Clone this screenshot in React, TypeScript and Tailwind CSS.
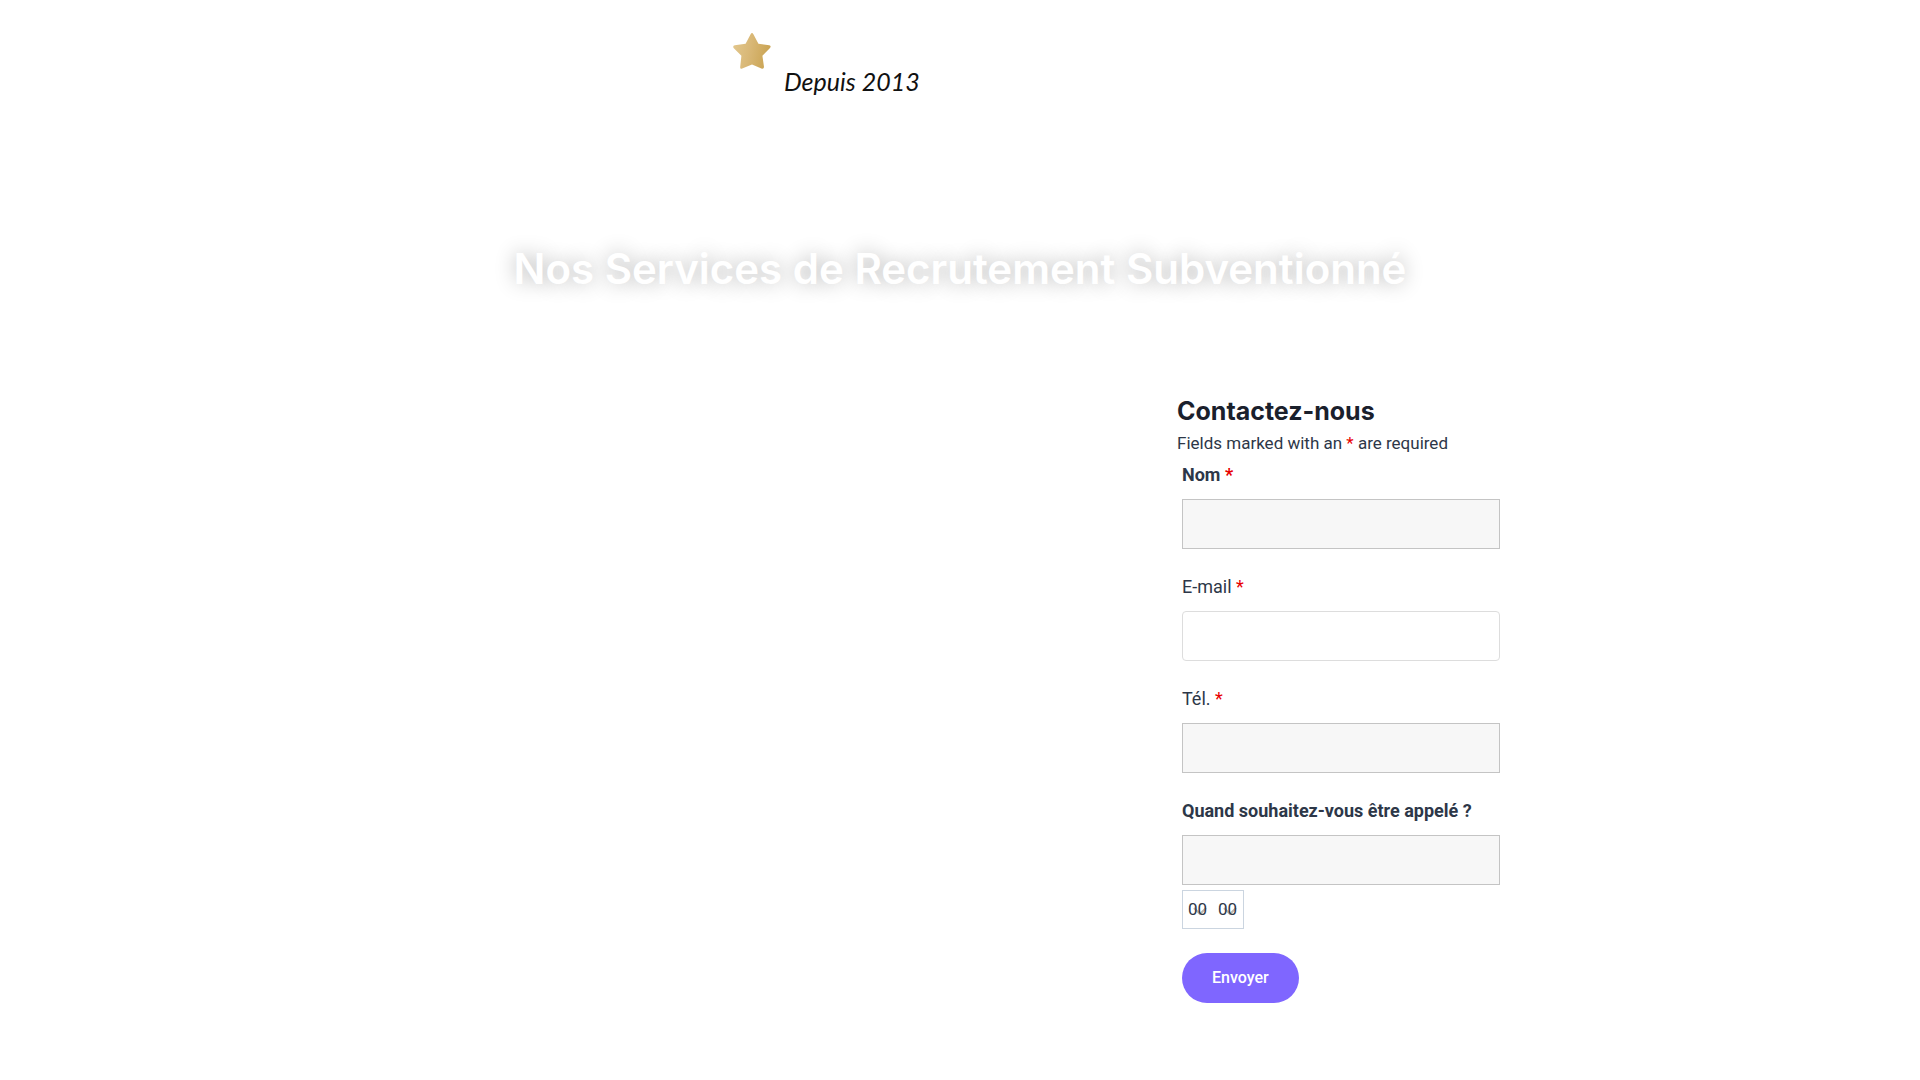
import React from 'react';

type FieldProps = {
  id: string;
  label: string;
  type?: string;
  bold?: boolean;
  required?: boolean;
  inputClass?: string;
};

const greyInput = "border-[#c4c4c4] bg-[#f7f7f7]";

function Required() {
  return <span className="text-[#e80000]">*</span>;
}

function Field({ id, label, type = "text", bold, required, inputClass = greyInput }: FieldProps) {
  return (
    <div>
      <label
        htmlFor={id}
        className={`block text-[18px] leading-[28px] mb-[10px] ${bold ? "font-bold" : "font-normal"}`}
      >
        {label} {required && <Required />}
      </label>
      <input id={id} type={type} className={`block w-full h-[50px] px-3 border ${inputClass}`} />
    </div>
  );
}

function TimeSelect({ label, count }: { label: string; count: number }) {
  const options = Array.from({ length: count }, (_, i) => String(i).padStart(2, "0"));

  return (
    <span className="relative block w-5 h-[37px]">
      {/* Arrow sits behind the digits */}
      <svg viewBox="0 0 14 8" className="absolute right-px top-4 w-[14px] h-2" fill="none" stroke="#b8b5b0" strokeWidth="2">
        <path d="M1 1 L7 7 L13 1" />
      </svg>
      <select aria-label={label} className="relative block w-5 h-full appearance-none bg-transparent text-[17px]">
        {options.map((o) => (
          <option key={o}>{o}</option>
        ))}
      </select>
    </span>
  );
}

export default function App() {
  return (
    <div className="bg-white pb-[75px] font-['Roboto',sans-serif] text-[#2d3748]">
      {/* Logo */}
      <header className="max-w-[1200px] mx-auto pt-8 h-[120px] flex pl-[372px] gap-3">
        <svg viewBox="0 0 40 38" className="w-10 h-[38px]">
          <defs>
            <linearGradient id="gold" x1="0" x2="1" y1="0" y2="0.2">
              <stop offset="0" stopColor="#e3c88f" />
              <stop offset="0.5" stopColor="#d9b877" />
              <stop offset="1" stopColor="#cba555" />
            </linearGradient>
          </defs>
          <path
            d="M18.6 2.2 Q20 0 21.4 2.2 L26.4 11.8 L37.2 13.3 Q39.6 14 38 16 L30.4 23.8 L32 35 Q31.8 37.4 29.4 36.6 L20 32.4 L10.2 36.6 Q8 37.4 8.2 35 L9.4 23.8 L1.6 16 Q0.4 14 2.8 13.3 L13.6 11.8 Z"
            fill="url(#gold)"
          />
        </svg>
        <p className="mt-8 text-[25px] leading-[34px] italic font-normal font-['Lato',sans-serif] text-[#111]">
          Depuis 2013
        </p>
      </header>

      {/* Hero title */}
      <section className="pt-[124px] pb-[100px]">
        <h1 className="text-center text-[42px] leading-[50px] font-semibold font-['Inter',sans-serif] text-white [text-shadow:0_0_20px_rgba(0,0,0,0.3)]">
          Nos Services de Recrutement Subventionné
        </h1>
      </section>

      {/* Contact form */}
      <section className="max-w-[1200px] mx-auto flex justify-end pr-[55px]">
        <form className="w-[328px]">
          <h2 className="text-[25px] leading-[35px] font-bold font-['Inter',sans-serif] text-[#1a202c]">
            Contactez-nous
          </h2>
          <p className="text-[17px] leading-[28px]">
            Fields marked with an <Required /> are required
          </p>

          <div className="px-[5px] pt-1 flex flex-col gap-6">
            <Field id="nom" label="Nom" bold required />
            <Field
              id="email"
              label="E-mail"
              type="email"
              required
              inputClass="border-[#dddddd] bg-white rounded"
            />
            <Field id="tel" label="Tél." type="tel" required />
            <div>
              <Field id="date" label="Quand souhaitez-vous être appelé ?" bold />
              <div className="mt-[5px] flex w-fit gap-[10px] border border-[#cbd5e0] px-[5px]">
                <TimeSelect label="Heure" count={24} />
                <TimeSelect label="Minute" count={60} />
              </div>
            </div>
            <button
              type="button"
              className="self-start h-[50px] px-[30px] rounded-full bg-[#7f66ff] text-white text-base font-medium"
            >
              Envoyer
            </button>
          </div>
        </form>
      </section>
    </div>
  );
}
